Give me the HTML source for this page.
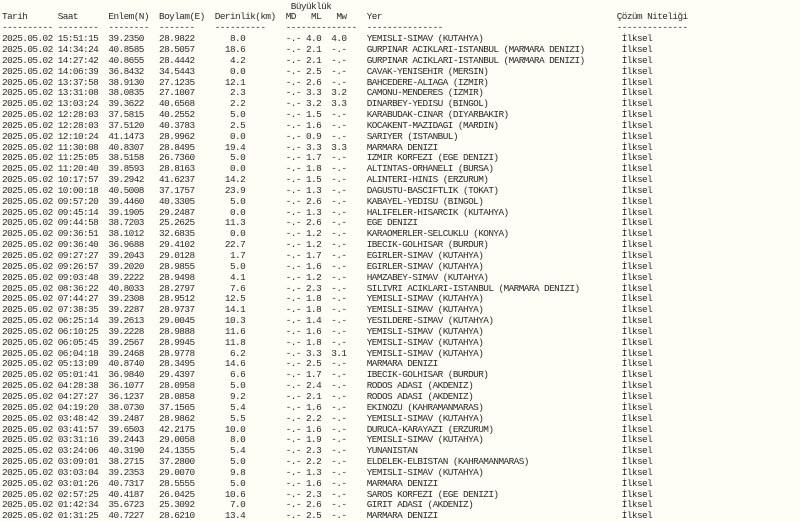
<!DOCTYPE html>
<html><head><meta charset="utf-8"><style>
html,body{margin:0;padding:0;background:#fefef6;width:800px;height:519px;overflow:hidden}
pre{position:absolute;top:1.6px;margin:0;font-family:"Liberation Mono",monospace;font-size:9.4px;letter-spacing:-0.56px;line-height:10.84px;color:#2a2a2a}
#a{left:2px}
#b{left:616.7px}
</style></head><body>
<pre id="a">                                                         Büyüklük
Tarih      Saat      Enlem(N)  Boylam(E)  Derinlik(km)  MD   ML   Mw    Yer
---------- --------  --------  -------    ----------    --------------  ---------------
2025.05.02 15:51:15  39.2350   28.9822       8.0        -.- 4.0  4.0    YEMISLI-SIMAV (KUTAHYA)
2025.05.02 14:34:24  40.8585   28.5057      18.6        -.- 2.1  -.-    GURPINAR ACIKLARI-ISTANBUL (MARMARA DENIZI)
2025.05.02 14:27:42  40.8655   28.4442       4.2        -.- 2.1  -.-    GURPINAR ACIKLARI-ISTANBUL (MARMARA DENIZI)
2025.05.02 14:06:39  36.8432   34.5443       0.0        -.- 2.5  -.-    CAVAK-YENISEHIR (MERSIN)
2025.05.02 13:37:58  38.9130   27.1235      12.1        -.- 2.6  -.-    BAHCEDERE-ALIAGA (IZMIR)
2025.05.02 13:31:08  38.0835   27.1007       2.3        -.- 3.3  3.2    CAMONU-MENDERES (IZMIR)
2025.05.02 13:03:24  39.3622   40.6568       2.2        -.- 3.2  3.3    DINARBEY-YEDISU (BINGOL)
2025.05.02 12:28:03  37.5815   40.2552       5.0        -.- 1.5  -.-    KARABUDAK-CINAR (DIYARBAKIR)
2025.05.02 12:28:03  37.5120   40.3783       2.5        -.- 1.6  -.-    KOCAKENT-MAZIDAGI (MARDIN)
2025.05.02 12:10:24  41.1473   28.9962       0.0        -.- 0.9  -.-    SARIYER (ISTANBUL)
2025.05.02 11:30:08  40.8307   28.8495      19.4        -.- 3.3  3.3    MARMARA DENIZI
2025.05.02 11:25:05  38.5158   26.7360       5.0        -.- 1.7  -.-    IZMIR KORFEZI (EGE DENIZI)
2025.05.02 11:20:40  39.8593   28.8163       0.0        -.- 1.8  -.-    ALTINTAS-ORHANELI (BURSA)
2025.05.02 10:17:57  39.2942   41.6237      14.2        -.- 1.5  -.-    ALINTERI-HINIS (ERZURUM)
2025.05.02 10:00:18  40.5008   37.1757      23.9        -.- 1.3  -.-    DAGUSTU-BASCIFTLIK (TOKAT)
2025.05.02 09:57:20  39.4460   40.3305       5.0        -.- 2.6  -.-    KABAYEL-YEDISU (BINGOL)
2025.05.02 09:45:14  39.1905   29.2487       0.0        -.- 1.3  -.-    HALIFELER-HISARCIK (KUTAHYA)
2025.05.02 09:44:58  38.7203   25.2625      11.3        -.- 2.6  -.-    EGE DENIZI
2025.05.02 09:36:51  38.1012   32.6835       0.0        -.- 1.2  -.-    KARAOMERLER-SELCUKLU (KONYA)
2025.05.02 09:36:40  36.9688   29.4102      22.7        -.- 1.2  -.-    IBECIK-GOLHISAR (BURDUR)
2025.05.02 09:27:27  39.2043   29.0128       1.7        -.- 1.7  -.-    EGIRLER-SIMAV (KUTAHYA)
2025.05.02 09:26:57  39.2020   28.9855       5.0        -.- 1.6  -.-    EGIRLER-SIMAV (KUTAHYA)
2025.05.02 09:03:48  39.2222   28.9498       4.1        -.- 1.2  -.-    HAMZABEY-SIMAV (KUTAHYA)
2025.05.02 08:36:22  40.8033   28.2797       7.6        -.- 2.3  -.-    SILIVRI ACIKLARI-ISTANBUL (MARMARA DENIZI)
2025.05.02 07:44:27  39.2308   28.9512      12.5        -.- 1.8  -.-    YEMISLI-SIMAV (KUTAHYA)
2025.05.02 07:38:35  39.2287   28.9737      14.1        -.- 1.8  -.-    YEMISLI-SIMAV (KUTAHYA)
2025.05.02 06:25:14  39.2613   29.0045      10.3        -.- 1.4  -.-    YESILDERE-SIMAV (KUTAHYA)
2025.05.02 06:10:25  39.2228   28.9888      11.6        -.- 1.6  -.-    YEMISLI-SIMAV (KUTAHYA)
2025.05.02 06:05:45  39.2567   28.9945      11.8        -.- 1.8  -.-    YEMISLI-SIMAV (KUTAHYA)
2025.05.02 06:04:18  39.2468   28.9778       6.2        -.- 3.3  3.1    YEMISLI-SIMAV (KUTAHYA)
2025.05.02 05:13:09  40.8740   28.3495      14.6        -.- 2.5  -.-    MARMARA DENIZI
2025.05.02 05:01:41  36.9840   29.4397       6.6        -.- 1.7  -.-    IBECIK-GOLHISAR (BURDUR)
2025.05.02 04:28:38  36.1077   28.0958       5.0        -.- 2.4  -.-    RODOS ADASI (AKDENIZ)
2025.05.02 04:27:27  36.1237   28.0858       9.2        -.- 2.1  -.-    RODOS ADASI (AKDENIZ)
2025.05.02 04:19:20  38.0730   37.1565       5.4        -.- 1.6  -.-    EKINOZU (KAHRAMANMARAS)
2025.05.02 03:48:42  39.2487   28.9862       5.5        -.- 2.2  -.-    YEMISLI-SIMAV (KUTAHYA)
2025.05.02 03:41:57  39.6503   42.2175      10.0        -.- 1.6  -.-    DURUCA-KARAYAZI (ERZURUM)
2025.05.02 03:31:16  39.2443   29.0058       8.0        -.- 1.9  -.-    YEMISLI-SIMAV (KUTAHYA)
2025.05.02 03:24:06  40.3190   24.1355       5.4        -.- 2.3  -.-    YUNANISTAN
2025.05.02 03:09:01  38.2715   37.2800       5.0        -.- 2.2  -.-    ELDELEK-ELBISTAN (KAHRAMANMARAS)
2025.05.02 03:03:04  39.2353   29.0070       9.8        -.- 1.3  -.-    YEMISLI-SIMAV (KUTAHYA)
2025.05.02 03:01:26  40.7317   28.5555       5.0        -.- 1.6  -.-    MARMARA DENIZI
2025.05.02 02:57:25  40.4187   26.0425      10.6        -.- 2.3  -.-    SAROS KORFEZI (EGE DENIZI)
2025.05.02 01:42:34  35.6723   25.3092       7.0        -.- 2.6  -.-    GIRIT ADASI (AKDENIZ)
2025.05.02 01:31:25  40.7227   28.6210      13.4        -.- 2.5  -.-    MARMARA DENIZI</pre>
<pre id="b">

Çözüm Niteliği
--------------
 İlksel
 İlksel
 İlksel
 İlksel
 İlksel
 İlksel
 İlksel
 İlksel
 İlksel
 İlksel
 İlksel
 İlksel
 İlksel
 İlksel
 İlksel
 İlksel
 İlksel
 İlksel
 İlksel
 İlksel
 İlksel
 İlksel
 İlksel
 İlksel
 İlksel
 İlksel
 İlksel
 İlksel
 İlksel
 İlksel
 İlksel
 İlksel
 İlksel
 İlksel
 İlksel
 İlksel
 İlksel
 İlksel
 İlksel
 İlksel
 İlksel
 İlksel
 İlksel
 İlksel
 İlksel</pre>
</body></html>
